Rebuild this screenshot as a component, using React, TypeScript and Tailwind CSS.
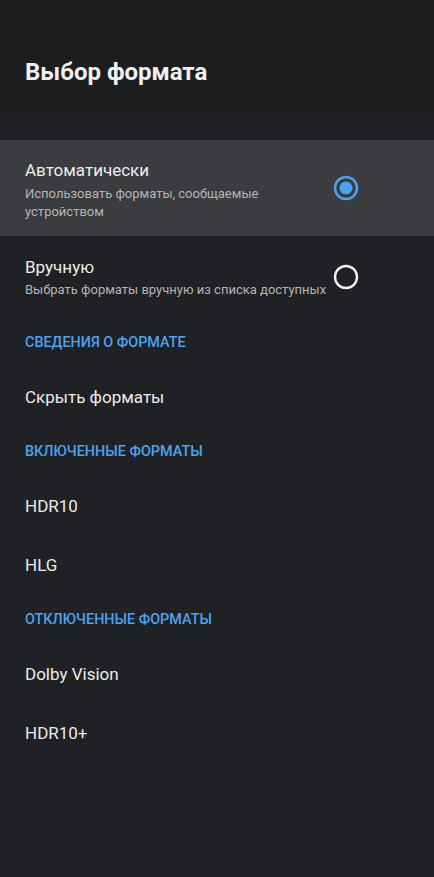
import React from 'react';

const font = { fontFamily: 'Roboto, "Noto Sans", sans-serif' };

function Radio({ checked }: { checked: boolean }) {
  return (
    <svg width="26" height="26" viewBox="0 0 26 26" className="shrink-0">
      <circle
        cx="13"
        cy="13"
        r="11"
        fill="none"
        stroke={checked ? '#4ba3f2' : '#f2f2f2'}
        strokeWidth="2.4"
      />
      {checked && <circle cx="13" cy="13" r="6.5" fill="#4ba3f2" />}
    </svg>
  );
}

function Section({ title }: { title: string }) {
  return (
    <div className="h-[50px] flex items-center px-[25px]">
      <span className="text-[14.4px] font-medium text-[#4ba3f2] uppercase">{title}</span>
    </div>
  );
}

function Item({ label }: { label: string }) {
  return (
    <div className="h-[59px] flex items-center px-[25px]">
      <span className="text-[17px] text-[#ececec]">{label}</span>
    </div>
  );
}

export default function App() {
  return (
    <div className="w-[434px] min-h-[877px] bg-[#202124] flex flex-col" style={font}>
      <div className="h-[111px] bg-[#1c1d1f] shadow-[0_1px_2px_rgba(0,0,0,0.35)] pt-[56px] px-[25px]">
        <h1 className="text-[24px] leading-[32px] font-bold text-[#f0f0f0]">Выбор формата</h1>
      </div>
      <div className="h-[29px]" />

      <div className="h-[96px] bg-[#3b3c3f] flex items-center pl-[25px] pr-[75px] gap-[4px]">
        <div className="flex-1 flex flex-col pt-[3px]">
          <span className="text-[17px] leading-[24px] text-[#ececec]">Автоматически</span>
          <span className="mt-[3px] text-[13px] leading-[18px] text-[#b4b4b6] w-[250px]">
            Использовать форматы, сообщаемые устройством
          </span>
        </div>
        <Radio checked />
      </div>

      <div className="h-[82px] flex items-center pl-[25px] pr-[75px] gap-[4px]">
        <div className="flex-1 flex flex-col">
          <span className="text-[17px] leading-[24px] text-[#ececec]">Вручную</span>
          <span className="mt-[2px] text-[13px] leading-[18px] text-[#b4b4b6] whitespace-nowrap">
            Выбрать форматы вручную из списка доступных
          </span>
        </div>
        <Radio checked={false} />
      </div>

      <Section title="Сведения о формате" />
      <Item label="Скрыть форматы" />
      <Section title="Включенные форматы" />
      <Item label="HDR10" />
      <Item label="HLG" />
      <Section title="Отключенные форматы" />
      <Item label="Dolby Vision" />
      <Item label="HDR10+" />
    </div>
  );
}
